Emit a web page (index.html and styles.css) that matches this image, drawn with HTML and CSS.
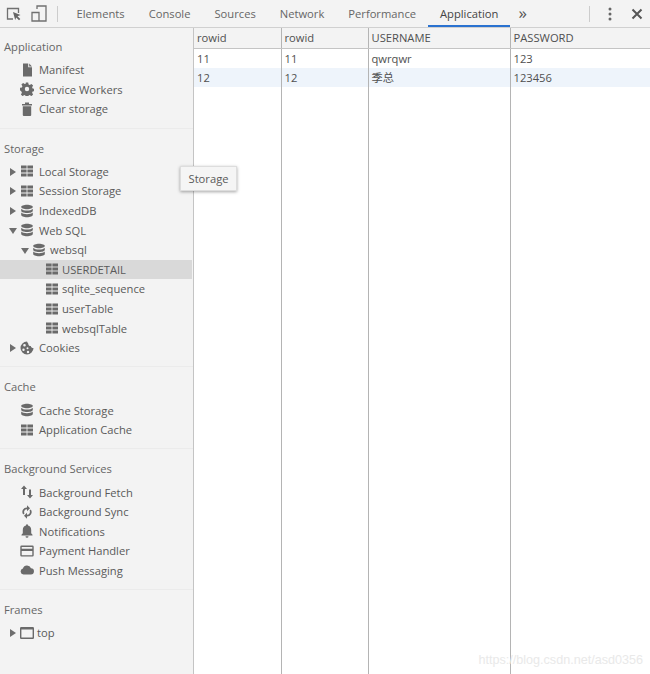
FILE: index.html
```html
<!DOCTYPE html>
<html lang="zh-CN">
<head>
    <meta charset="UTF-8">
    <meta name="viewport" content="width=device-width, initial-scale=1.0">
    <title>DevTools - Application</title>
    <link rel="stylesheet" href="styles.css">
</head>
<body>
    <svg class="defs" width="0" height="0">
        <symbol id="i-grid" viewBox="0 0 14 14">
            <path d="M1 1.500h5.600v3H1zM7.400 1.500H13v3H7.400zM1 5.500h5.600v3H1zM7.400 5.500H13v3H7.400zM1 9.500h5.600v3H1zM7.400 9.500H13v3H7.400z"/>
        </symbol>
        <symbol id="i-db" viewBox="0 0 14 14">
            <path d="M7 .8c3.200 0 5.800 1 5.800 2.200S10.200 5.200 7 5.200 1.200 4.200 1.200 3 3.800.8 7 .8z"/>
            <path d="M1.200 4.700C2.200 6 4.500 6.500 7 6.500s4.800-.5 5.800-1.800v2C12.800 8 10.200 9 7 9S1.200 8 1.200 6.700z"/>
            <path d="M1.200 8.600C2.200 9.800 4.500 10.300 7 10.300s4.800-.5 5.800-1.700V11c0 1.200-2.600 2.200-5.800 2.200S1.200 12.200 1.200 11z"/>
        </symbol>
    </svg>

    <header class="toolbar">
        <svg class="tool-icon" width="16" height="16" viewBox="0 0 16 16">
            <path class="line" d="M7 13H1.500V2.500h11V7"/>
            <path d="M7 6l7.500 3-3 1.200 2.800 2.800-1.300 1.300-2.800-2.800L9.200 14z"/>
        </svg>
        <svg class="tool-icon device" width="16" height="18" viewBox="0 0 16 18">
            <path class="line" d="M6 4V1h9v15H1V7.500h7V16"/>
        </svg>
        <span class="tool-sep"></span>
        <nav class="tabs">
            <a class="tab">Elements</a>
            <a class="tab">Console</a>
            <a class="tab">Sources</a>
            <a class="tab">Network</a>
            <a class="tab">Performance</a>
            <a class="tab active">Application</a>
        </nav>
        <span class="more">»</span>
        <span class="tool-sep end"></span>
        <svg class="kebab" width="4" height="14" viewBox="0 0 4 14">
            <circle cx="2" cy="2" r="1.500"/><circle cx="2" cy="7" r="1.500"/><circle cx="2" cy="12" r="1.500"/>
        </svg>
        <svg class="close" width="12" height="12" viewBox="0 0 12 12">
            <path d="M1.500 1.500l9 9M10.500 1.500l-9 9"/>
        </svg>
    </header>

    <div class="main">
        <aside class="sidebar">
            <section class="group first">
                <h3>Application</h3>
                <div class="item">
                    <svg class="icon" viewBox="0 0 14 14"><path d="M3 .5h5.200V4.300H12v9.200H3zM9.200.6L12 3.400H9.200z"/></svg>
                    <span>Manifest</span>
                </div>
                <div class="item">
                    <svg class="icon" viewBox="0 0 14 14"><path fill-rule="evenodd" d="M5.800.5h2.400l.4 1.900 1.100.5 1.700-1 1.700 1.700-1 1.700.5 1.100 1.900.4v2.400l-1.900.4-.5 1.100 1 1.700-1.700 1.700-1.700-1-1.100.5-.4 1.400H5.800l-.4-1.400-1.100-.5-1.700 1-1.700-1.700 1-1.700-.5-1.100L0 8.200V5.800l1.900-.4.500-1.100-1-1.700 1.700-1.700 1.700 1 1.100-.5zM7 4.800a2.200 2.200 0 1 0 0 4.400 2.200 2.200 0 0 0 0-4.400z"/></svg>
                    <span>Service Workers</span>
                </div>
                <div class="item">
                    <svg class="icon" viewBox="0 0 14 14"><path d="M2 2h10v1.500H2zM5 .5h4V2H5zM2.800 4.300h8.400V13a1 1 0 0 1-1 1H3.800a1 1 0 0 1-1-1z"/></svg>
                    <span>Clear storage</span>
                </div>
            </section>

            <section class="group">
                <h3>Storage</h3>
                <div class="item">
                    <i class="arrow"></i>
                    <svg class="icon"><use href="#i-grid"/></svg>
                    <span>Local Storage</span>
                </div>
                <div class="item">
                    <i class="arrow"></i>
                    <svg class="icon"><use href="#i-grid"/></svg>
                    <span>Session Storage</span>
                </div>
                <div class="item">
                    <i class="arrow"></i>
                    <svg class="icon"><use href="#i-db"/></svg>
                    <span>IndexedDB</span>
                </div>
                <div class="item">
                    <i class="arrow open"></i>
                    <svg class="icon"><use href="#i-db"/></svg>
                    <span>Web SQL</span>
                </div>
                <div class="item level2">
                    <i class="arrow open"></i>
                    <svg class="icon"><use href="#i-db"/></svg>
                    <span>websql</span>
                </div>
                <div class="item level3 selected">
                    <svg class="icon"><use href="#i-grid"/></svg>
                    <span>USERDETAIL</span>
                </div>
                <div class="item level3">
                    <svg class="icon"><use href="#i-grid"/></svg>
                    <span>sqlite_sequence</span>
                </div>
                <div class="item level3">
                    <svg class="icon"><use href="#i-grid"/></svg>
                    <span>userTable</span>
                </div>
                <div class="item level3">
                    <svg class="icon"><use href="#i-grid"/></svg>
                    <span>websqlTable</span>
                </div>
                <div class="item">
                    <i class="arrow"></i>
                    <svg class="icon" viewBox="0 0 14 14"><path fill-rule="evenodd" d="M7 .5a6.500 6.500 0 1 0 6.500 6.500c-1.500 0-2.500-.6-2.700-2-1.500 0-2.600-1-2.600-2.600C7.600 1.800 7.300 1.200 7 .5zM4.500 3a1.300 1.300 0 1 1 0 2.600 1.300 1.300 0 0 1 0-2.600zM3.500 7.500a1.200 1.200 0 1 1 0 2.400 1.200 1.200 0 0 1 0-2.400zM7.500 6.300a1 1 0 1 1 0 2 1 1 0 0 1 0-2zM8 9.800a1.200 1.200 0 1 1 0 2.400 1.200 1.200 0 0 1 0-2.400z"/></svg>
                    <span>Cookies</span>
                </div>
            </section>

            <section class="group">
                <h3>Cache</h3>
                <div class="item">
                    <svg class="icon"><use href="#i-db"/></svg>
                    <span>Cache Storage</span>
                </div>
                <div class="item">
                    <svg class="icon"><use href="#i-grid"/></svg>
                    <span>Application Cache</span>
                </div>
            </section>

            <section class="group">
                <h3>Background Services</h3>
                <div class="item">
                    <svg class="icon" viewBox="0 0 14 14"><path d="M4 .5L7 4H5v6H3V4H1zM10 13.500L13 10h-2V4.500H9V10H7z"/></svg>
                    <span>Background Fetch</span>
                </div>
                <div class="item">
                    <svg class="icon" viewBox="0 0 14 14"><path d="M7 2.500V.3l3 3-3 3V4.200a2.800 2.800 0 0 0-2.500 4.200L3.200 9.600A4.500 4.500 0 0 1 7 2.500zM10.800 4.400A4.500 4.500 0 0 1 7 11.500v2.200l-3-3 3-3v2.100a2.800 2.800 0 0 0 2.500-4.200z"/></svg>
                    <span>Background Sync</span>
                </div>
                <div class="item">
                    <svg class="icon" viewBox="0 0 14 14"><path d="M6 .5h2v1.100c2 .5 3.200 2.200 3.200 4.300v3.300l1.300 1.500v.8h-11v-.8l1.300-1.500V5.900c0-2.100 1.200-3.800 3.200-4.300zM5.500 12.300h3A1.500 1.500 0 0 1 7 13.800a1.500 1.500 0 0 1-1.500-1.500z"/></svg>
                    <span>Notifications</span>
                </div>
                <div class="item">
                    <svg class="icon" viewBox="0 0 14 14"><path fill-rule="evenodd" d="M1.500 1.500h11a1.200 1.200 0 0 1 1.200 1.200v8.600a1.200 1.200 0 0 1-1.200 1.200h-11A1.200 1.200 0 0 1 .3 11.300V2.700a1.200 1.200 0 0 1 1.200-1.200zM1.700 3v1.700h10.600V3zM1.700 7v4.300h10.600V7z"/></svg>
                    <span>Payment Handler</span>
                </div>
                <div class="item">
                    <svg class="icon" viewBox="0 0 14 14"><path d="M3.500 11.500a3 3 0 0 1-.6-5.900A4.300 4.300 0 0 1 11 5.300a3.100 3.100 0 0 1-.3 6.200z"/></svg>
                    <span>Push Messaging</span>
                </div>
            </section>

            <section class="group last">
                <h3>Frames</h3>
                <div class="item frame">
                    <i class="arrow"></i>
                    <svg class="icon" viewBox="0 0 14 14"><path fill-rule="evenodd" d="M1.200 1h11.600A1.200 1.200 0 0 1 14 2.200v9.600a1.200 1.200 0 0 1-1.200 1.200H1.200A1.200 1.200 0 0 1 0 11.800V2.200A1.200 1.200 0 0 1 1.200 1zm.2 2.500v8.100h11.200V3.500z"/></svg>
                    <span>top</span>
                </div>
            </section>
        </aside>

        <div class="content">
            <table class="data">
                <colgroup>
                    <col class="col-a"><col class="col-a"><col class="col-b"><col>
                </colgroup>
                <thead>
                    <tr><th>rowid</th><th>rowid</th><th>USERNAME</th><th>PASSWORD</th></tr>
                </thead>
                <tbody>
                    <tr><td>11</td><td>11</td><td>qwrqwr</td><td>123</td></tr>
                    <tr class="even"><td>12</td><td>12</td><td>季总</td><td>123456</td></tr>
                    <tr class="filler"><td></td><td></td><td></td><td></td></tr>
                </tbody>
            </table>
        </div>
    </div>

    <div class="tooltip">Storage</div>
    <div class="watermark">https://blog.csdn.net/asd0356</div>
</body>
</html>
```

FILE: styles.css
```css
* {
    box-sizing: border-box;
}

html, body {
    height: 100%;
}

body {
    margin: 0;
    display: flex;
    flex-direction: column;
    position: relative;
    overflow: hidden;
    background-color: #fff;
    color: #5a5a5a;
    font-family: 'Open Sans', 'Noto Sans CJK SC', sans-serif;
    font-size: 11.200px;
}

.defs {
    position: absolute;
}

/* Toolbar */
.toolbar {
    height: 28px;
    flex: none;
    display: flex;
    align-items: center;
    padding-left: 6px;
    background-color: #f3f3f3;
    border-bottom: 1px solid #d0d0d0;
}

.tool-icon {
    flex: none;
    fill: #666;
}

.tool-icon .line, .tool-icon.device path {
    fill: none;
    stroke: #707070;
    stroke-width: 1.3;
}

.device {
    margin-left: 9px;
}

.tool-sep {
    width: 1px;
    height: 16px;
    margin-left: 10px;
    background-color: #ccc;
}

.tabs {
    display: flex;
    height: 27px;
    margin-left: 6.500px;
}

.tab {
    padding: 0 12px;
    line-height: 28px;
    color: #666;
    white-space: nowrap;
}

.tab.active {
    color: #444;
    border-bottom: 2px solid #2a72d0;
}

.more {
    margin-left: 8px;
    margin-top: -1px;
    font-size: 17px;
    line-height: 20px;
    color: #555;
}

.tool-sep.end {
    margin-left: auto;
}

.kebab {
    margin-left: 18px;
    fill: #666;
}

.close {
    margin-left: 19px;
    margin-right: 7px;
    fill: none;
    stroke: #555;
    stroke-width: 2;
}

.main {
    flex: 1;
    min-height: 0;
    display: flex;
}

/* Sidebar */
.sidebar {
    width: 194px;
    flex: none;
    background-color: #f3f3f3;
    border-right: 1px solid #c4c4c4;
}

.group {
    padding: 10px 0 8.800px;
    border-bottom: 1px solid #ebebeb;
}

.group.first {
    padding-top: 9px;
}

.group.last {
    border-bottom: none;
}

.group h3 {
    margin: 0 0 3px;
    padding-left: 4px;
    font-size: 11.200px;
    font-weight: 400;
    line-height: 20px;
    color: #666;
}

.item {
    height: 19.600px;
    display: flex;
    align-items: center;
    padding-left: 20px;
    white-space: nowrap;
    position: relative;
}

.item .icon {
    width: 14px;
    height: 14px;
    margin-right: 5px;
    flex: none;
    fill: #6a6a6a;
}

.item.level2 {
    padding-left: 32px;
}

.item.level2 .icon {
    margin-right: 4px;
}

.item.level3 {
    padding-left: 45px;
}

.item.level3 .icon {
    margin-right: 3px;
}

.item.selected {
    background-color: #d9d9d9;
    margin-right: 1px;
}

.item.frame .icon {
    margin-right: 3px;
}

.arrow {
    position: absolute;
    left: 10px;
    top: 6px;
    width: 0;
    height: 0;
    border-left: 6px solid #6e6e6e;
    border-top: 4px solid transparent;
    border-bottom: 4px solid transparent;
}

.arrow.open {
    left: 9px;
    top: 8px;
    border-top: 6px solid #6e6e6e;
    border-left: 4px solid transparent;
    border-right: 4px solid transparent;
    border-bottom: none;
}

.level2 .arrow.open {
    left: 21px;
}

/* Table */
.content {
    flex: 1;
    min-width: 0;
}

.data {
    width: 100%;
    height: 100%;
    table-layout: fixed;
    border-collapse: collapse;
    color: #505050;
}

.col-a {
    width: 87px;
}

.col-b {
    width: 142px;
}

.data th, .data td {
    padding: 0 3px;
    text-align: left;
    font-weight: 400;
    height: 19.700px;
    line-height: 19px;
    border-right: 1px solid #b4b4b4;
    white-space: nowrap;
}

.data th {
    height: 20px;
    background-color: #f3f3f3;
    border-bottom: 1px solid #c4c4c4;
}

.data th:last-child, .data td:last-child {
    border-right: none;
}

.data .even td {
    background-color: #eef4fb;
}

.data .filler td {
    height: auto;
}

/* Over the content */
.tooltip {
    position: absolute;
    left: 180px;
    top: 166px;
    width: 57px;
    height: 25px;
    text-align: center;
    line-height: 24px;
    background-color: #f5f5f5;
    border: 1px solid #ddd;
    box-shadow: 0 1px 3px rgba(0, 0, 0, 0.35);
}

.watermark {
    position: absolute;
    right: 7px;
    bottom: 7px;
    font-family: 'Liberation Sans', sans-serif;
    font-size: 12.600px;
    color: #e9e9e9;
}
```
